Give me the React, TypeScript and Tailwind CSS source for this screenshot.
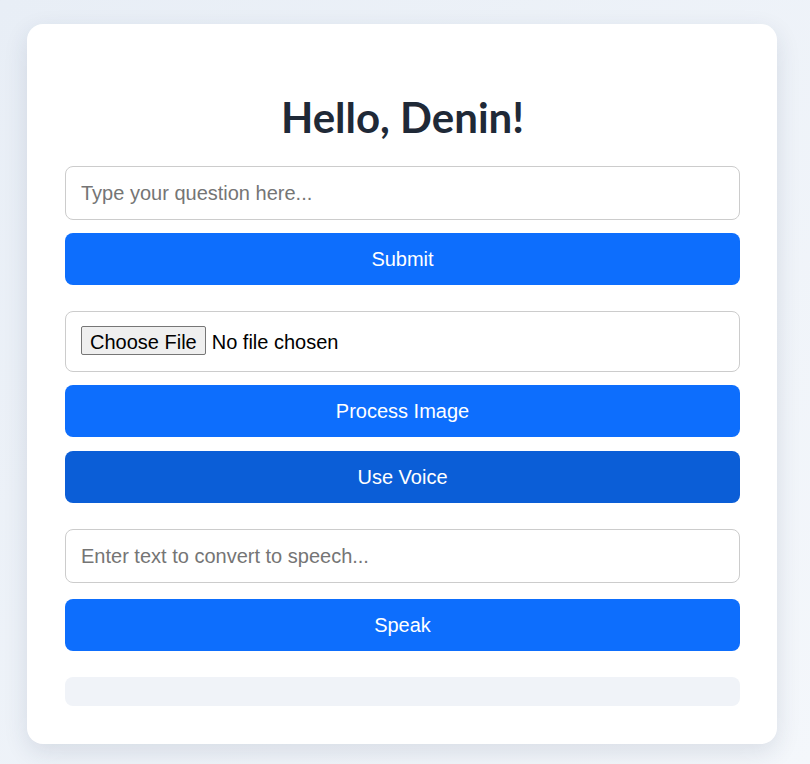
import React from 'react';

const inputCls =
  'w-full h-[54px] px-[15px] border border-[#cccccc] rounded-lg bg-white text-[20px] text-black placeholder:text-[#757575] outline-none';
const btnCls = 'w-full h-[52px] rounded-lg text-white text-[20px] flex items-center justify-center';

export default function App() {
  return (
    <div
      className="min-h-[764px] w-full bg-gradient-to-br from-[#e8eef6] to-[#f4f7fb] pt-[24px] pb-[20px]"
      style={{ fontFamily: '"Liberation Sans", Arial, sans-serif' }}
    >
      <div className="ml-[27px] w-[750px] bg-white rounded-2xl shadow-[0_8px_24px_rgba(30,50,80,0.12)] pl-[38px] pr-[37px] pt-[38px] pb-[38px]">
        <h1
          className="mt-[31px] mb-[25px] text-center text-[42px] leading-[48px] font-bold text-[#1f2937]"
          style={{ fontFamily: 'Lato, "Open Sans", sans-serif' }}
        >
          Hello, Denin!
        </h1>

        <input className={inputCls} placeholder="Type your question here..." />
        <button className={`${btnCls} mt-[13px] bg-[#0d6efd]`}>Submit</button>

        <div className="mt-[26px] w-full h-[61px] px-[15px] border border-[#cccccc] rounded-lg flex items-center">
          <input
            type="file"
            className="text-[20px] text-black file:h-[29px] file:px-[8px] file:mr-[6px] file:bg-[#efefef] file:border file:border-solid file:border-[#767676] file:rounded-[2px] file:text-[20px] file:text-black"
          />
        </div>
        <button className={`${btnCls} mt-[13px] bg-[#0d6efd]`}>Process Image</button>
        <button className={`${btnCls} mt-[14px] bg-[#0b5ed7]`}>Use Voice</button>

        <input className={`${inputCls} mt-[26px]`} placeholder="Enter text to convert to speech..." />
        <button className={`${btnCls} mt-[16px] bg-[#0d6efd]`}>Speak</button>

        <div className="mt-[26px] h-[29px] w-full rounded-lg bg-[#f0f3f8]" />
      </div>
    </div>
  );
}
